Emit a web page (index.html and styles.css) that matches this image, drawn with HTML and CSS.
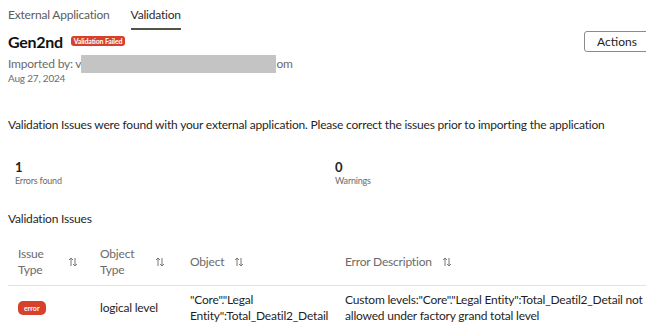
FILE: index.html
```html
<!DOCTYPE html>
<html lang="en">

<head>
    <meta charset="UTF-8">
    <meta name="viewport" content="width=device-width, initial-scale=1.0">
    <title>Validation | Gen2nd</title>
    <link rel="stylesheet" href="styles.css">
</head>

<body>
    <nav class="tabs">
        <a class="tab">External Application</a>
        <a class="tab active">Validation</a>
    </nav>

    <header class="app-header">
        <div class="app-info">
            <div class="app-title">
                <h1>Gen2nd</h1>
                <span class="badge">Validation Failed</span>
            </div>
            <p class="imported">Imported by: v<span class="redacted"></span>om</p>
            <p class="date">Aug 27, 2024</p>
        </div>
        <button class="btn-actions">Actions</button>
    </header>

    <p class="message">Validation Issues were found with your external application. Please correct the issues prior to importing the application</p>

    <section class="stats">
        <div class="stat">
            <span class="stat-value">1</span>
            <span class="stat-label">Errors found</span>
        </div>
        <div class="stat">
            <span class="stat-value">0</span>
            <span class="stat-label">Warnings</span>
        </div>
    </section>

    <h2 class="section-title">Validation Issues</h2>

    <div class="issues">
        <div class="row head">
            <div class="cell"><span class="label w1">Issue Type</span><svg class="sort" viewBox="0 0 10 10"><path d="M3 9V1M1 3l2-2 2 2M7 1v8M5 7l2 2 2-2"/></svg></div>
            <div class="cell"><span class="label w2">Object Type</span><svg class="sort" viewBox="0 0 10 10"><path d="M3 9V1M1 3l2-2 2 2M7 1v8M5 7l2 2 2-2"/></svg></div>
            <div class="cell"><span class="label">Object</span><svg class="sort" viewBox="0 0 10 10"><path d="M3 9V1M1 3l2-2 2 2M7 1v8M5 7l2 2 2-2"/></svg></div>
            <div class="cell"><span class="label">Error Description</span><svg class="sort" viewBox="0 0 10 10"><path d="M3 9V1M1 3l2-2 2 2M7 1v8M5 7l2 2 2-2"/></svg></div>
        </div>
        <div class="row">
            <div class="cell"><span class="tag-error">error</span></div>
            <div class="cell">logical level</div>
            <div class="cell">"Core"."Legal Entity":Total_Deatil2_Detail</div>
            <div class="cell">Custom levels:"Core"."Legal Entity":Total_Deatil2_Detail not allowed under factory grand total level</div>
        </div>
    </div>
</body>

</html>
```

FILE: styles.css
```css
:root {
    --text: #1f1f1f;
    --muted: #6b6b6b;
    --red: #d7402b;
    --line: #e2e2e2;
    --tab-line: #4f5641;
}

* {
    margin: 0;
    padding: 0;
    box-sizing: border-box;
}

body {
    font-family: Lato, "Noto Sans", sans-serif;
    font-size: 12px;
    letter-spacing: -0.2px;
    color: var(--text);
    background: #fff;
    padding: 0 0 0 8px;
    overflow: hidden;
}

.tabs {
    display: flex;
    gap: 21px;
    height: 30px;
}

.tab {
    display: block;
    padding-top: 7px;
    font-size: 12px;
    color: #5c5c5c;
    border-bottom: 2px solid transparent;
}

.tab.active {
    color: #2b2b2b;
    border-bottom-color: var(--tab-line);
}

.app-header {
    display: flex;
    justify-content: space-between;
    align-items: flex-start;
}

.app-title {
    display: flex;
    align-items: center;
    gap: 8px;
    height: 22px;
}

.app-title h1 {
    font-size: 16px;
    font-weight: 700;
    letter-spacing: -0.3px;
    color: #111;
}

.badge {
    background: var(--red);
    color: #fff;
    font-size: 7px;
    font-weight: 700;
    letter-spacing: -0.15px;
    padding: 1px 3px;
    border-radius: 3px;
    line-height: 8px;
}

.imported {
    margin-top: 3px;
    color: var(--muted);
    font-size: 12px;
    line-height: 18px;
}

.redacted {
    display: inline-block;
    width: 195px;
    height: 18px;
    background: #c4c4c4;
    vertical-align: top;
}

.date {
    color: var(--muted);
    font-size: 10px;
    line-height: 10px;
}

.btn-actions {
    margin-top: 1px;
    margin-right: -4px;
    width: 66px;
    height: 21px;
    font-family: inherit;
    font-size: 12px;
    color: #222;
    background: #fff;
    border: 1px solid #8a8a8a;
    border-radius: 3px;
}

.message {
    margin-top: 34px;
    font-size: 12px;
    line-height: 16px;
}

.stats {
    display: grid;
    grid-template-columns: 320px 1fr;
    padding-left: 7px;
    margin-top: 27px;
}

.stat {
    display: flex;
    flex-direction: column;
}

.stat-value {
    font-size: 13px;
    font-weight: 700;
    line-height: 14px;
}

.stat-label {
    font-size: 9px;
    color: var(--muted);
    line-height: 14px;
}

.section-title {
    margin-top: 23px;
    font-size: 12px;
    font-weight: 400;
    line-height: 16px;
}

.issues {
    margin-top: 11px;
}

.row {
    display: grid;
    grid-template-columns: 82px 90px 155px 1fr;
    align-items: center;
}

.row.head {
    border-bottom: 1px solid var(--line);
    height: 48px;
    color: var(--muted);
}

.row:not(.head) {
    padding-top: 6px;
}

.cell {
    display: flex;
    align-items: center;
    padding-left: 10px;
    line-height: 16px;
}

.label.w1 {
    width: 40px;
}

.label.w2 {
    width: 45px;
}

.sort {
    width: 10px;
    height: 10px;
    margin-left: 10px;
    fill: none;
    stroke: #777;
    stroke-width: 1;
}

.tag-error {
    background: var(--red);
    color: #fff;
    font-size: 7px;
    font-weight: 700;
    letter-spacing: 0;
    padding: 3px 6px;
    border-radius: 5px;
    line-height: 8px;
}
```
